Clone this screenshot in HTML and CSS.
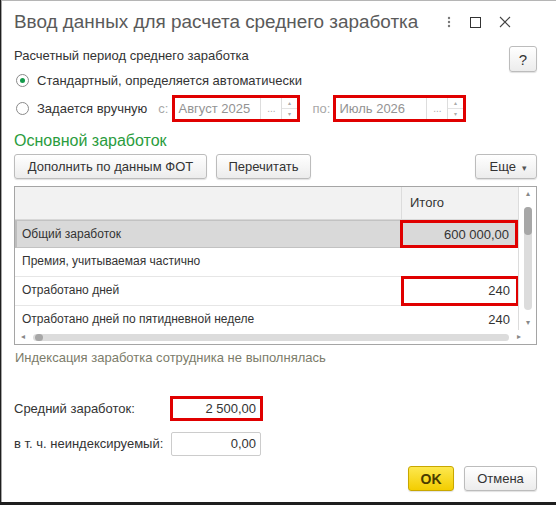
FILE: index.html
```html
<!DOCTYPE html>
<html lang="ru">
<head>
    <meta charset="UTF-8">
    <title>Ввод данных для расчета среднего заработка</title>
    <link rel="stylesheet" href="styles.css">
</head>
<body>
    <div class="window">
        <div class="titlebar">
            <div class="title">Ввод данных для расчета среднего заработка</div>
            <div class="title-tools">
                <span class="tool-more">
                    <svg width="4" height="12" viewBox="0 0 4 12"><circle cx="2" cy="2" r="1.2" fill="#777"/><circle cx="2" cy="6" r="1.2" fill="#777"/><circle cx="2" cy="10" r="1.2" fill="#777"/></svg>
                </span>
                <span class="tool-max">
                    <svg width="11" height="11" viewBox="0 0 11 11"><rect x="0.5" y="0.5" width="10" height="10" fill="none" stroke="#333"/></svg>
                </span>
                <span class="tool-close">
                    <svg width="12" height="12" viewBox="0 0 12 12"><path d="M1 1L11 11M11 1L1 11" stroke="#444" stroke-width="1.1"/></svg>
                </span>
            </div>
        </div>

        <div class="content">
            <div class="period-head">
                <span>Расчетный период среднего заработка</span>
                <button class="btn btn-help">?</button>
            </div>

            <div class="radio-row auto">
                <span class="radio checked"></span>
                <span>Стандартный, определяется автоматически</span>
            </div>

            <div class="radio-row manual">
                <span class="radio"></span>
                <span class="manual-label">Задается вручную</span>
                <span class="field-cap cap-from">с:</span>
                <div class="period-field mark">
                    <span class="pf-text">Август 2025</span>
                    <span class="pf-choose">...</span>
                    <span class="pf-spin"><i>▴</i><i>▾</i></span>
                </div>
                <span class="field-cap cap-to">по:</span>
                <div class="period-field mark">
                    <span class="pf-text">Июль 2026</span>
                    <span class="pf-choose">...</span>
                    <span class="pf-spin"><i>▴</i><i>▾</i></span>
                </div>
            </div>

            <div class="group-title">Основной заработок</div>

            <div class="toolbar">
                <button class="btn btn-fot">Дополнить по данным ФОТ</button>
                <button class="btn btn-reread">Перечитать</button>
                <button class="btn btn-more">Еще <span class="caret">▾</span></button>
            </div>

            <div class="grid">
                <div class="grid-main">
                    <div class="grid-view">
                        <div class="grid-row head">
                            <div class="c-name"></div>
                            <div class="c-total">Итого</div>
                        </div>
                        <div class="grid-row selected">
                            <div class="c-name">Общий заработок</div>
                            <div class="c-total num mark-cell">600 000,00</div>
                        </div>
                        <div class="grid-row">
                            <div class="c-name">Премия, учитываемая частично</div>
                            <div class="c-total num"></div>
                        </div>
                        <div class="grid-row">
                            <div class="c-name">Отработано дней</div>
                            <div class="c-total num mark-cell">240</div>
                        </div>
                        <div class="grid-row">
                            <div class="c-name">Отработано дней по пятидневной неделе</div>
                            <div class="c-total num">240</div>
                        </div>
                    </div>
                    <div class="vscroll">
                        <span class="arrow">▴</span>
                        <div class="vtrack"><div class="vthumb"></div></div>
                        <span class="arrow">▾</span>
                    </div>
                </div>
                <div class="hscroll">
                    <span class="arrow">◂</span>
                    <div class="htrack"><div class="hthumb"></div></div>
                    <span class="arrow">▸</span>
                </div>
            </div>

            <div class="note">Индексация заработка сотрудника не выполнялась</div>

            <div class="sum-row first">
                <span class="sum-label">Средний заработок:</span>
                <div class="num-field mark">2 500,00</div>
            </div>
            <div class="sum-row">
                <span class="sum-label">в т. ч. неиндексируемый:</span>
                <div class="num-field">0,00</div>
            </div>

            <div class="footer">
                <button class="btn btn-ok">OK</button>
                <button class="btn btn-cancel">Отмена</button>
            </div>
        </div>
    </div>
</body>
</html>
```

FILE: styles.css
```css
html, body {
    margin: 0;
    padding: 0;
    background-color: #1e1e1e;
}
body {
    font-family: "Liberation Sans", Arial, sans-serif;
    font-size: 13px;
    color: #333;
    overflow: hidden;
}
.window {
    width: 555px;
    height: 501px;
    margin-left: 1px;
    border-left: 1px solid #a5a5a5;
    border-top: 1px solid #b5b5b5;
    background-color: #fff;
}
.titlebar {
    height: 42px;
    display: flex;
    align-items: center;
    padding-left: 12px;
}
.title {
    font-size: 18.9px;
    color: #5a5a5a;
    flex: 1;
}
.title-tools {
    display: flex;
    align-items: center;
    margin-right: 46px;
}
.tool-more {
    display: flex;
}
.tool-max {
    display: flex;
    margin-left: 19px;
}
.tool-close {
    display: flex;
    margin-left: 18px;
}
.content {
    padding-left: 12px;
    width: 523px;
}

/* buttons */
.btn {
    font-family: inherit;
    font-size: 13px;
    color: #333;
    height: 25px;
    padding: 0 14px;
    border: 1px solid #bcbcbc;
    border-radius: 3px;
    background: linear-gradient(#ffffff, #ececec);
    box-shadow: 0 1px 1px rgba(0, 0, 0, 0.12);
    white-space: nowrap;
}
.btn-help {
    width: 28px;
    padding: 0;
    font-size: 15px;
    height: 26px;
}

.period-head {
    display: flex;
    justify-content: space-between;
    align-items: flex-start;
    height: 26px;
    padding-top: 3px;
}
.period-head span {
    margin-top: 2px;
}
.radio-row {
    display: flex;
    align-items: center;
}
.radio-row.auto {
    height: 16px;
    margin-bottom: 7px;
}
.radio-row.manual {
    height: 27px;
}
.radio {
    width: 13px;
    height: 13px;
    box-sizing: border-box;
    border: 1px solid #8a8a8a;
    border-radius: 50%;
    background: #fff;
    margin-left: 2px;
    margin-right: 8px;
    position: relative;
}
.radio.checked::after {
    content: "";
    position: absolute;
    left: 3px;
    top: 3px;
    width: 5px;
    height: 5px;
    border-radius: 50%;
    background: #139a4b;
}
.field-cap {
    color: #a8a8a8;
}
.cap-from {
    margin-left: 11px;
    margin-right: 4px;
}
.cap-to {
    margin-left: 12px;
    margin-right: 3px;
}
.period-field {
    display: flex;
    height: 27px;
    box-sizing: border-box;
    border: 1px solid #ccc;
    color: #939393;
    font-size: 13px;
}
.period-field:first-of-type {
    width: 128px;
}
.period-field:last-of-type {
    width: 133px;
}
.pf-text {
    flex: 1;
    padding-left: 3px;
    line-height: 21px;
}
.pf-choose {
    width: 20px;
    border-left: 1px solid #ddd;
    text-align: center;
    line-height: 21px;
    font-size: 10px;
    color: #aaa;
}
.pf-spin {
    width: 15px;
    border-left: 1px solid #ddd;
    display: flex;
    flex-direction: column;
}
.pf-spin i {
    font-style: normal;
    font-size: 6px;
    color: #aaa;
    text-align: center;
    flex: 1;
    line-height: 10px;
}
.pf-spin i:first-child {
    border-bottom: 1px solid #e3e3e3;
}
.mark {
    border: 3px solid #e00000;
}

.group-title {
    color: #2a9c3d;
    font-size: 16px;
    height: 19px;
    line-height: 19px;
    margin-top: 9px;
    margin-bottom: 4px;
}
.toolbar {
    display: flex;
    height: 25px;
    margin-bottom: 7px;
}
.btn-fot {
    width: 193px;
    padding: 0;
}
.btn-reread {
    width: 95px;
    padding: 0;
    margin-left: 9px;
}
.btn-more {
    margin-left: auto;
    width: 62px;
    padding: 0 6px 0 10px;
}
.caret {
    font-size: 9px;
    color: #555;
    margin-left: 2px;
}

/* table */
.grid {
    width: 521px;
    border: 1px solid #a5a5a5;
    font-size: 12px;
}
.grid-main {
    display: flex;
    height: 143px;
}
.grid-view {
    flex: 1;
    overflow: hidden;
}
.grid-row {
    display: flex;
    height: 29px;
    border-bottom: 1px solid #e6e6e6;
    box-sizing: border-box;
}
.grid-row.head {
    height: 33px;
    background-color: #f2f2f2;
    border-bottom: 1px solid #d8d8d8;
    font-size: 13px;
}
.grid-row.selected {
    background-color: #d9d9d9;
    border: 1px solid #c2c2c2;
    border-left: 2px solid #bdbdbd;
    height: 28px;
}
.c-name {
    flex: 1;
    padding-left: 7px;
    line-height: 26px;
}
.grid-row.head .c-name {
    border-right: 1px solid #dcdcdc;
}
.grid-row.selected .c-name {
    padding-left: 5px;
}
.c-total {
    width: 116px;
    box-sizing: border-box;
    padding: 0 8px;
    line-height: 28px;
}
.grid-row.head .c-total {
    line-height: 32px;
}
.num {
    text-align: right;
    font-size: 13px;
}
.mark-cell {
    outline: 3px solid #e00000;
    outline-offset: -2px;
}
.vscroll {
    width: 17px;
    border-left: 1px solid #dcdcdc;
    display: flex;
    flex-direction: column;
    align-items: center;
}
.arrow {
    font-size: 8px;
    color: #888;
    line-height: 14px;
}
.vtrack {
    flex: 1;
    width: 8px;
    margin: 6px 0 6px;
    border-radius: 4px;
    background: #dcdcdc;
}
.vthumb {
    height: 28px;
    border-radius: 4px;
    background: #a7a7a7;
}
.hscroll {
    display: flex;
    align-items: center;
    height: 14px;
    padding-left: 6px;
    width: 500px;
}
.htrack {
    flex: 1;
    height: 7px;
    margin: 0 8px;
    border-radius: 4px;
    background: #dcdcdc;
}
.hthumb {
    width: 8px;
    height: 7px;
    margin-left: 2px;
    border-radius: 4px;
    background: #a7a7a7;
}

.note {
    color: #7c7c6a;
    height: 26px;
    line-height: 26px;
    margin-bottom: 25px;
    padding-left: 1px;
}
.sum-row {
    display: flex;
    align-items: center;
    height: 25px;
    margin-top: 10px;
}
.sum-row.first {
    margin-top: 0;
}
.sum-label {
    width: 157px;
}
.num-field {
    width: 90px;
    height: 24px;
    box-sizing: border-box;
    border: 1px solid #ccc;
    border-radius: 2px;
    text-align: right;
    padding-right: 4px;
    line-height: 22px;
    font-size: 13px;
}
.num-field.mark {
    width: 93px;
    margin-left: -1px;
    border: 3px solid #e00000;
    border-radius: 0;
    line-height: 19px;
    height: 25px;
}
.footer {
    display: flex;
    justify-content: flex-end;
    margin-top: 10px;
    width: 523px;
}
.btn-ok {
    width: 46px;
    padding: 0;
    font-weight: bold;
    font-size: 14px;
    color: #4a3c00;
    border-color: #c8a700;
    background: linear-gradient(#fde84f, #f3cd00);
}
.btn-cancel {
    width: 73px;
    padding: 0;
    margin-left: 10px;
}
```
